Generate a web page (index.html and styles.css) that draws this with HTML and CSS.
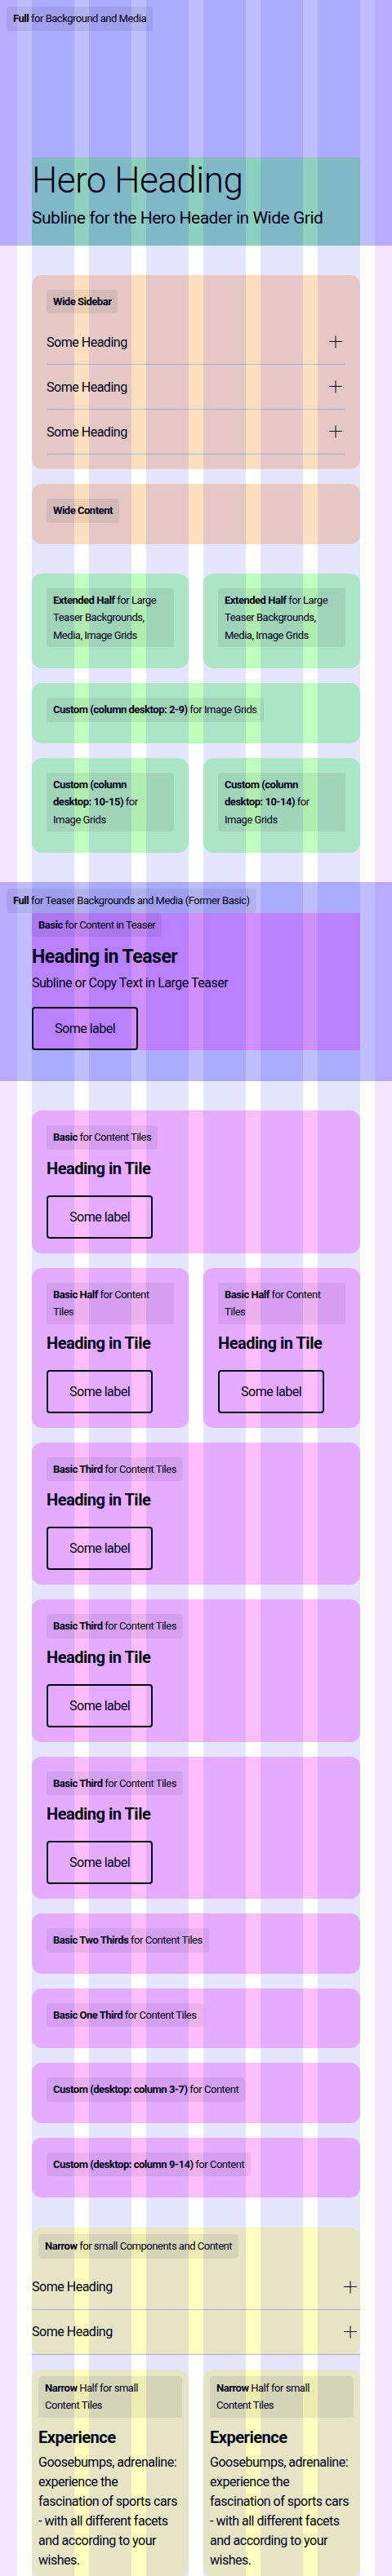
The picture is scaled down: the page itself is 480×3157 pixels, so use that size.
FILE: index.html
```html
<!DOCTYPE html>
<html lang="en">
<head>
    <meta charset="UTF-8">
    <meta name="viewport" content="width=device-width, initial-scale=1.0">
    <title>Grid</title>
    <link rel="stylesheet" href="styles.css">
</head>
<body>
    <!-- Full -->
    <section class="full full-hero">
        <span class="tag"><b>Full</b> for Background and Media</span>
        <div class="hero">
            <h1>Hero Heading</h1>
            <p>Subline for the Hero Header in Wide Grid</p>
        </div>
    </section>

    <!-- Wide -->
    <div class="group">
        <div class="card wide">
            <span class="tag"><b>Wide Sidebar</b></span>
            <div class="accordion">
                <div class="acc-item">
                    <span>Some Heading</span>
                    <svg class="plus" width="24" height="24" viewBox="0 0 24 24"><path d="M12 4.5v15M4 11.5h16" /></svg>
                </div>
                <div class="acc-item">
                    <span>Some Heading</span>
                    <svg class="plus" width="24" height="24" viewBox="0 0 24 24"><path d="M12 4.5v15M4 11.5h16" /></svg>
                </div>
                <div class="acc-item">
                    <span>Some Heading</span>
                    <svg class="plus" width="24" height="24" viewBox="0 0 24 24"><path d="M12 4.5v15M4 11.5h16" /></svg>
                </div>
            </div>
        </div>
        <div class="card wide">
            <span class="tag"><b>Wide Content</b></span>
        </div>
    </div>

    <!-- Extended -->
    <div class="group">
        <div class="row">
            <div class="card extended">
                <span class="tag tag-full"><b>Extended Half</b> for Large<br>Teaser Backgrounds,<br>Media, Image Grids</span>
            </div>
            <div class="card extended">
                <span class="tag tag-full"><b>Extended Half</b> for Large<br>Teaser Backgrounds,<br>Media, Image Grids</span>
            </div>
        </div>
        <div class="card extended">
            <span class="tag"><b>Custom (column desktop: 2-9)</b> for Image Grids</span>
        </div>
        <div class="row">
            <div class="card extended">
                <span class="tag tag-full"><b>Custom (column<br>desktop: 10-15)</b> for<br>Image Grids</span>
            </div>
            <div class="card extended">
                <span class="tag tag-full"><b>Custom (column<br>desktop: 10-14)</b> for<br>Image Grids</span>
            </div>
        </div>
    </div>

    <!-- Full teaser -->
    <section class="full full-teaser">
        <span class="tag"><b>Full</b> for Teaser Backgrounds and Media (Former Basic)</span>
        <div class="teaser">
            <span class="tag"><b>Basic</b> for Content in Teaser</span>
            <h2>Heading in Teaser</h2>
            <p>Subline or Copy Text in Large Teaser</p>
            <button class="btn">Some label</button>
        </div>
    </section>

    <!-- Basic -->
    <div class="group">
        <div class="card basic">
            <span class="tag"><b>Basic</b> for Content Tiles</span>
            <h3>Heading in Tile</h3>
            <button class="btn">Some label</button>
        </div>
        <div class="row">
            <div class="card basic">
                <span class="tag tag-full"><b>Basic Half</b> for Content<br>Tiles</span>
                <h3>Heading in Tile</h3>
                <button class="btn">Some label</button>
            </div>
            <div class="card basic">
                <span class="tag tag-full"><b>Basic Half</b> for Content<br>Tiles</span>
                <h3>Heading in Tile</h3>
                <button class="btn">Some label</button>
            </div>
        </div>
        <div class="card basic">
            <span class="tag"><b>Basic Third</b> for Content Tiles</span>
            <h3>Heading in Tile</h3>
            <button class="btn">Some label</button>
        </div>
        <div class="card basic">
            <span class="tag"><b>Basic Third</b> for Content Tiles</span>
            <h3>Heading in Tile</h3>
            <button class="btn">Some label</button>
        </div>
        <div class="card basic">
            <span class="tag"><b>Basic Third</b> for Content Tiles</span>
            <h3>Heading in Tile</h3>
            <button class="btn">Some label</button>
        </div>
        <div class="card basic">
            <span class="tag"><b>Basic Two Thirds</b> for Content Tiles</span>
        </div>
        <div class="card basic">
            <span class="tag"><b>Basic One Third</b> for Content Tiles</span>
        </div>
        <div class="card basic">
            <span class="tag"><b>Custom (desktop: column 3-7)</b> for Content</span>
        </div>
        <div class="card basic">
            <span class="tag"><b>Custom (desktop: column 9-14)</b> for Content</span>
        </div>
    </div>

    <!-- Narrow -->
    <div class="group group-narrow">
        <div class="card narrow narrow-list">
            <span class="tag"><b>Narrow</b> for small Components and Content</span>
            <div class="accordion">
                <div class="acc-item">
                    <span>Some Heading</span>
                    <svg class="plus" width="24" height="24" viewBox="0 0 24 24"><path d="M12 4.5v15M4 11.5h16" /></svg>
                </div>
                <div class="acc-item">
                    <span>Some Heading</span>
                    <svg class="plus" width="24" height="24" viewBox="0 0 24 24"><path d="M12 4.5v15M4 11.5h16" /></svg>
                </div>
            </div>
        </div>
        <div class="row">
            <div class="card narrow">
                <span class="tag tag-full"><b>Narrow</b> Half for small<br>Content Tiles</span>
                <h3 class="exp">Experience</h3>
                <p class="copy">Goosebumps, adrenaline:<br>experience the<br>fascination of sports cars<br>- with all different facets<br>and according to your<br>wishes.</p>
            </div>
            <div class="card narrow">
                <span class="tag tag-full"><b>Narrow</b> Half for small<br>Content Tiles</span>
                <h3 class="exp">Experience</h3>
                <p class="copy">Goosebumps, adrenaline:<br>experience the<br>fascination of sports cars<br>- with all different facets<br>and according to your<br>wishes.</p>
            </div>
        </div>
    </div>
</body>
</html>
```

FILE: styles.css
```css
body {
    margin: 0;
    font-family: Roboto, "Liberation Sans", sans-serif;
    letter-spacing: -0.03em;
    color: #010205;
    background-color: #fff;
}

/* grid overlay (margins + 6 columns) */
body::after {
    content: "";
    position: fixed;
    inset: 0;
    pointer-events: none;
    background: linear-gradient(90deg,
        rgba(135, 0, 255, 0.1) 0 21px, transparent 21px 39px,
        rgba(0, 0, 255, 0.1) 39px 91px, transparent 91px 109px,
        rgba(0, 0, 255, 0.1) 109px 161px, transparent 161px 179px,
        rgba(0, 0, 255, 0.1) 179px 231px, transparent 231px 249px,
        rgba(0, 0, 255, 0.1) 249px 301px, transparent 301px 319px,
        rgba(0, 0, 255, 0.1) 319px 371px, transparent 371px 389px,
        rgba(0, 0, 255, 0.1) 389px 441px, transparent 441px 459px,
        rgba(135, 0, 255, 0.1) 459px 100%);
}

h1, h2, h3, p {
    margin: 0;
}

.tag {
    display: block;
    width: fit-content;
    font-size: 13px;
    line-height: 21.5px;
    padding: 4px 8px;
    border-radius: 4px;
    background-color: rgba(0, 0, 0, 0.07);
    margin-bottom: 8px;
}

.tag-full {
    width: auto;
}

.tag b {
    font-weight: 700;
}

/* full width sections */
.full {
    background-color: rgba(0, 0, 255, 0.25);
}

.full > .tag {
    margin-bottom: 0;
}

.full-hero {
    padding: 8px 8px 0;
}

.hero {
    margin: 155px 31px 0;
    padding-bottom: 19px;
    background-color: rgba(0, 255, 0, 0.25);
}

.hero h1 {
    font-size: 44px;
    line-height: 56px;
    font-weight: 300;
}

.hero p {
    margin-top: 3px;
    font-size: 21px;
    line-height: 30px;
}

.full-teaser {
    margin-top: 36px;
    padding: 8px 8px 38px;
}

.teaser {
    margin: 0 31px;
    background-color: rgba(255, 0, 255, 0.25);
}

.teaser h2 {
    font-size: 23px;
    line-height: 34px;
    font-weight: 700;
}

.teaser p {
    margin-top: 2px;
    font-size: 16px;
    line-height: 26px;
}

.teaser .btn {
    margin-top: 16px;
}

/* groups of cards */
.group {
    display: flex;
    flex-direction: column;
    gap: 18px;
    margin: 36px 39px 0;
}

.group-narrow {
    margin-top: 37px;
}

.row {
    display: grid;
    grid-template-columns: 1fr 1fr;
    gap: 18px;
}

.card {
    padding: 18px;
    border-radius: 12px;
}

.wide {
    background-color: rgba(255, 127, 0, 0.25);
}

.extended {
    background-color: rgba(0, 255, 0, 0.25);
}

.basic {
    background-color: rgba(255, 0, 255, 0.25);
}

.narrow {
    padding: 8px;
    background-color: rgba(255, 255, 0, 0.25);
}

.basic h3 {
    font-size: 20px;
    line-height: 30px;
    font-weight: 700;
}

.basic .btn {
    margin-top: 18px;
}

.btn {
    display: block;
    height: 53px;
    padding: 0 26px;
    font-family: inherit;
    font-size: 16px;
    letter-spacing: inherit;
    color: #010205;
    background: transparent;
    border: 2px solid #010205;
    border-radius: 4px;
}

/* accordion */
.acc-item {
    display: flex;
    justify-content: space-between;
    align-items: center;
    height: 54px;
    border-bottom: 1px solid #b7c0e0;
    font-size: 16px;
}

.plus {
    fill: none;
    stroke: #010205;
    stroke-width: 1;
}

.narrow-list {
    padding: 8px 0 0;
}

.narrow-list .tag {
    margin-left: 8px;
}

.exp {
    font-size: 20px;
    line-height: 32px;
    font-weight: 700;
}

.copy {
    margin-top: 3px;
    font-size: 16px;
    line-height: 24px;
}
```
